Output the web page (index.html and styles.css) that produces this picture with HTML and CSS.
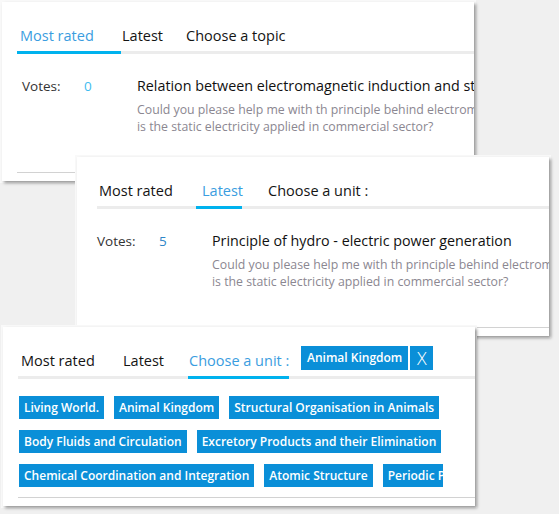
FILE: index.html
```html
<!DOCTYPE html>
<html lang="en">
<head>
<meta charset="utf-8">
<title>Questions</title>
<link rel="stylesheet" href="styles.css">
</head>
<body>
<div class="desk">

  <section class="card card-one">
    <nav class="tabs tabs-a">
      <span class="tab c1-t1 is-active">Most rated</span>
      <span class="tab c1-t2">Latest</span>
      <span class="tab">Choose a topic</span>
    </nav>
    <div class="post">
      <span class="votes-label">Votes:</span>
      <span class="votes-count count-light">0</span>
      <div class="post-body">
        <div class="post-title">Relation between electromagnetic induction and static electricity</div>
        <div class="post-desc">Could you please help me with th principle behind electromagnetic induction and how<br>is the static electricity applied in commercial sector?</div>
      </div>
    </div>
    <div class="card-rule"></div>
  </section>

  <section class="card card-two">
    <nav class="tabs tabs-b">
      <span class="tab c2-t1">Most rated</span>
      <span class="tab c2-t2 is-active">Latest</span>
      <span class="tab c2-t3">Choose a unit :</span>
    </nav>
    <div class="post">
      <span class="votes-label">Votes:</span>
      <span class="votes-count count-dark">5</span>
      <div class="post-body">
        <div class="post-title">Principle of hydro - electric power generation</div>
        <div class="post-desc">Could you please help me with th principle behind electromagnetic induction and how<br>is the static electricity applied in commercial sector?</div>
      </div>
    </div>
    <div class="card-rule"></div>
  </section>

  <section class="card card-three">
    <nav class="tabs tabs-a">
      <span class="tab c3-t1">Most rated</span>
      <span class="tab c3-t2">Latest</span>
      <span class="tab c3-t3 is-active">Choose a unit :</span>
      <span class="head-tag">Animal Kingdom</span>
      <span class="head-close">X</span>
    </nav>
    <div class="unit-rows">
      <div class="unit-row">
        <span class="unit">Living World.</span>
        <span class="unit">Animal Kingdom</span>
        <span class="unit">Structural Organisation in Animals</span>
      </div>
      <div class="unit-row">
        <span class="unit">Body Fluids and Circulation</span>
        <span class="unit">Excretory Products and their Elimination</span>
      </div>
      <div class="unit-row">
        <span class="unit">Chemical Coordination and Integration</span>
        <span class="unit">Atomic Structure</span>
        <span class="unit">Periodic Properties</span>
      </div>
    </div>
    <div class="card-rule"></div>
  </section>

</div>
</body>
</html>
```

FILE: styles.css
```css
* { box-sizing: border-box; }

body {
  margin: 0;
  background: #f0f0f0;
  font-family: "Open Sans", "Noto Sans", sans-serif;
}

.desk {
  position: relative;
  width: 559px;
  height: 514px;
  overflow: hidden;
}

.card {
  position: absolute;
  width: 472px;
  height: 179px;
  background: #fff;
  overflow: hidden;
  display: flex;
  flex-direction: column;
  padding-bottom: 8px;
  box-shadow: 2px 2px 3px rgba(0, 0, 0, 0.4), 0 0 0 2px #f9f9f9;
}

.card-one { left: 2px; top: 2px; }
.card-two { left: 77px; top: 157px; }
.card-three { left: 3px; top: 327px; }

/* tabs */
.tabs {
  display: flex;
  margin-top: 24px;
  border-bottom: 3px solid #ececec;
  font-size: 14.5px;
  line-height: 20px;
  color: #141414;
}
.tabs-a { margin-left: 15px; }
.tabs-b { margin-left: 20px; }

.tab {
  flex-shrink: 0;
  padding: 0 0 5px 1px;
  margin-bottom: -3px;
  border-bottom: 3px solid transparent;
  white-space: nowrap;
}
.tab.is-active {
  color: #3a9de0;
  border-bottom-color: #00b2ee;
}

.c1-t1 { width: 104px; padding-left: 3px; }
.c1-t2 { width: 64px; }
.c2-t1 { width: 99px; padding-left: 2px; }
.c2-t2 { width: 46px; padding-left: 6px; }
.c2-t3 { margin-left: 25px; }
.c3-t1 { width: 104px; padding-left: 3px; }
.c3-t2 { width: 66px; }
.c3-t3 { width: 101px; }

.head-tag,
.head-close {
  align-self: flex-start;
  flex-shrink: 0;
  height: 24px;
  margin-top: -5px;
  background: #0a8fd8;
  color: #fff;
  white-space: nowrap;
}
.head-tag {
  margin-left: 12px;
  padding: 0 6px;
  font-size: 12px;
  font-weight: 600;
  line-height: 24px;
}
.head-close {
  margin-left: 2px;
  width: 23px;
  text-align: center;
  font-size: 18px;
  font-weight: 300;
  line-height: 24px;
}

/* post row */
.post {
  display: flex;
  align-items: baseline;
  margin: 22px 0 0 20px;
}
.votes-label {
  flex-shrink: 0;
  width: 62px;
  font-size: 13.5px;
  color: #333;
}
.votes-count {
  flex-shrink: 0;
  width: 53px;
  font-size: 13.5px;
}
.count-light { color: #3fbcf0; }
.count-dark { color: #2f86c8; }

.post-body { flex-shrink: 0; }
.post-title {
  font-size: 14.3px;
  line-height: 20px;
  color: #111;
  white-space: nowrap;
}
.post-desc {
  margin-top: 5px;
  font-size: 12.3px;
  line-height: 17px;
  color: #8b8791;
  white-space: nowrap;
}

/* unit tags */
.unit-rows {
  display: flex;
  flex-direction: column;
  gap: 11px;
  width: 424px;
  margin: 17px 0 0 16px;
}
.unit-row {
  display: flex;
  gap: 10px;
  overflow: hidden;
}
.unit {
  flex-shrink: 0;
  height: 23px;
  padding: 0 5px;
  background: #0a8fd8;
  color: #fff;
  font-size: 12px;
  font-weight: 600;
  line-height: 23px;
  white-space: nowrap;
}

.card-rule {
  margin: auto 0 0 15px;
  border-top: 1px solid #d2d2d2;
}
```
